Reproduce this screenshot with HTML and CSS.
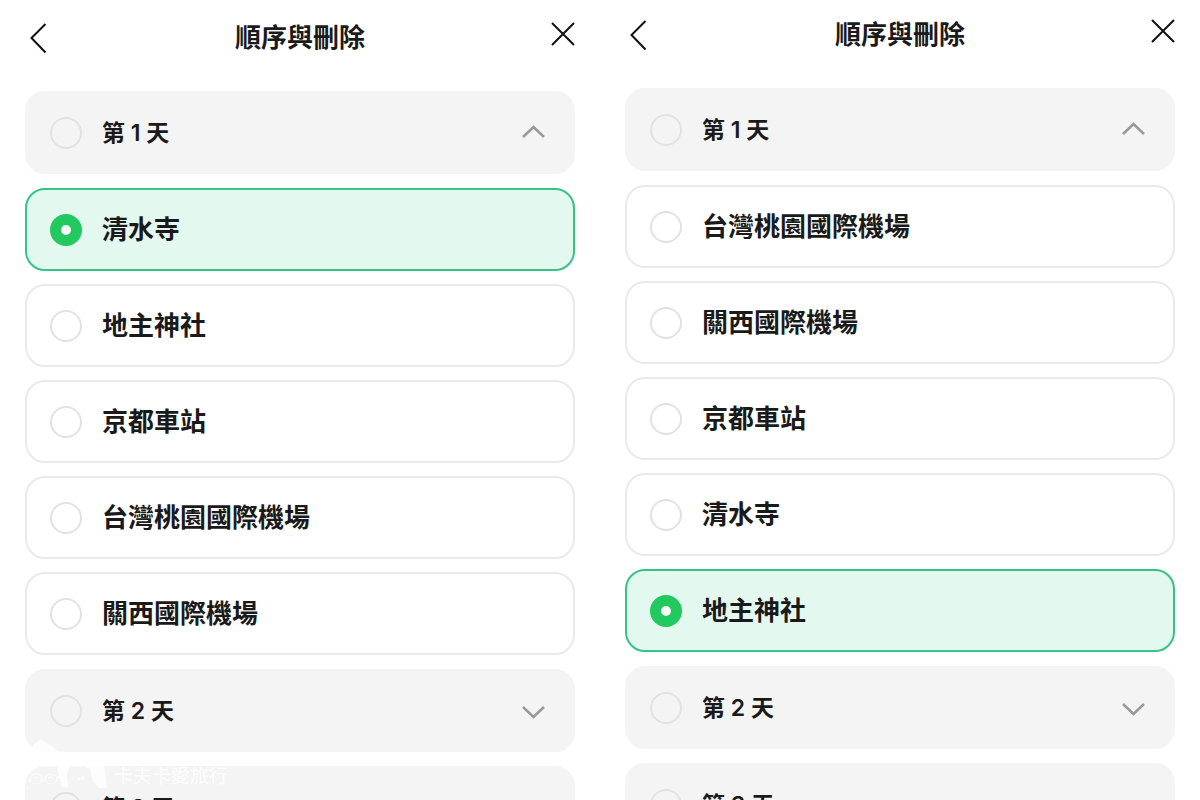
FILE: index.html
```html
<!DOCTYPE html>
<html lang="zh-Hant">
<head>
  <meta charset="UTF-8" />
  <meta name="viewport" content="width=device-width, initial-scale=1.0"/>
  <title>順序與刪除</title>
  <link rel="stylesheet" href="styles.css">
</head>
<body>

  <main class="screens">

    <section class="screen">
      <header class="topbar">
        <button type="button" class="icon-btn" aria-label="返回">
          <svg width="24" height="32" viewBox="0 0 24 32"><path d="M20.500 2 6.500 16l14 14.500"/></svg>
        </button>
        <h1>順序與刪除</h1>
        <button type="button" class="icon-btn" aria-label="關閉">
          <svg width="24" height="24" viewBox="0 0 24 24"><path d="M1 1l22 22M23 1 1 23"/></svg>
        </button>
      </header>

      <form class="days">
        <div class="day">
          <div class="row day-row">
            <label><input type="radio" name="before"><span>第 1 天</span></label>
            <button type="button" class="toggle" aria-label="收合第 1 天" aria-expanded="true">
              <svg width="24" height="16" viewBox="0 0 24 16"><path d="M2 12 12.500 2 23 12"/></svg>
            </button>
          </div>
          <div class="places">
            <label class="row"><input type="radio" name="before" checked><span>清水寺</span></label>
            <label class="row"><input type="radio" name="before"><span>地主神社</span></label>
            <label class="row"><input type="radio" name="before"><span>京都車站</span></label>
            <label class="row"><input type="radio" name="before"><span>台灣桃園國際機場</span></label>
            <label class="row"><input type="radio" name="before"><span>關西國際機場</span></label>
          </div>
        </div>
        <div class="day">
          <div class="row day-row">
            <label><input type="radio" name="before"><span>第 2 天</span></label>
            <button type="button" class="toggle" aria-label="展開第 2 天" aria-expanded="false">
              <svg width="24" height="16" viewBox="0 0 24 16"><path d="M2 4l10.500 10L23 4"/></svg>
            </button>
          </div>
        </div>
        <div class="day">
          <div class="row day-row">
            <label><input type="radio" name="before"><span>第 3 天</span></label>
            <button type="button" class="toggle" aria-label="展開第 3 天" aria-expanded="false">
              <svg width="24" height="16" viewBox="0 0 24 16"><path d="M2 4l10.500 10L23 4"/></svg>
            </button>
          </div>
        </div>
      </form>
    </section>

    <section class="screen screen-after">
      <header class="topbar">
        <button type="button" class="icon-btn" aria-label="返回">
          <svg width="24" height="32" viewBox="0 0 24 32"><path d="M20.500 2 6.500 16l14 14.500"/></svg>
        </button>
        <h1>順序與刪除</h1>
        <button type="button" class="icon-btn" aria-label="關閉">
          <svg width="24" height="24" viewBox="0 0 24 24"><path d="M1 1l22 22M23 1 1 23"/></svg>
        </button>
      </header>

      <form class="days">
        <div class="day">
          <div class="row day-row">
            <label><input type="radio" name="after"><span>第 1 天</span></label>
            <button type="button" class="toggle" aria-label="收合第 1 天" aria-expanded="true">
              <svg width="24" height="16" viewBox="0 0 24 16"><path d="M2 12 12.500 2 23 12"/></svg>
            </button>
          </div>
          <div class="places">
            <label class="row"><input type="radio" name="after"><span>台灣桃園國際機場</span></label>
            <label class="row"><input type="radio" name="after"><span>關西國際機場</span></label>
            <label class="row"><input type="radio" name="after"><span>京都車站</span></label>
            <label class="row"><input type="radio" name="after"><span>清水寺</span></label>
            <label class="row"><input type="radio" name="after" checked><span>地主神社</span></label>
          </div>
        </div>
        <div class="day">
          <div class="row day-row">
            <label><input type="radio" name="after"><span>第 2 天</span></label>
            <button type="button" class="toggle" aria-label="展開第 2 天" aria-expanded="false">
              <svg width="24" height="16" viewBox="0 0 24 16"><path d="M2 4l10.500 10L23 4"/></svg>
            </button>
          </div>
        </div>
        <div class="day">
          <div class="row day-row">
            <label><input type="radio" name="after"><span>第 3 天</span></label>
            <button type="button" class="toggle" aria-label="展開第 3 天" aria-expanded="false">
              <svg width="24" height="16" viewBox="0 0 24 16"><path d="M2 4l10.500 10L23 4"/></svg>
            </button>
          </div>
        </div>
      </form>
    </section>

  </main>

  <div class="watermark">
    <svg width="90" height="60" viewBox="0 0 90 60">
      <!-- hair and hat -->
      <path class="fill" d="M0 9 3 7 7 9 11 4 17 0 23 4 29 7 34 12 60 13 64 12 68 14 78 18 80 28 82 47 76 48 70 42 66 28 64 28 62 26 46 26 42 34 44 47 38 47 35 34 33 26 8 26 2 31Z"/>
      <!-- glasses -->
      <path d="M4 40h3M17 40h5M32 38l8-2"/>
      <ellipse cx="12" cy="39" rx="6" ry="5"/>
      <ellipse cx="27" cy="39" rx="6" ry="5"/>
      <path d="M9 38q3-2 6 0M24 38q3-2 6 0M0 44l5 5"/>
      <circle class="fill" cx="59" cy="38" r="1"/>
      <circle class="fill" cx="55" cy="39" r="1"/>
    </svg>
    <span>卡夫卡愛旅行</span>
  </div>

</body>
</html>
```
FILE: styles.css
```css
:root {
  --text-color: #1a1a1a;
  --line-color: #eaeaea;
  --day-bg: #f4f4f4;
  --green: #22c95f;
  --picked-bg: #e3f9ef;
  --picked-line: #36c485;
}

* {
  box-sizing: border-box;
}

body {
  margin: 0;
  background: #fff;
  color: var(--text-color);
  font-family: Inter, "Noto Sans CJK TC", sans-serif;
  font-weight: 600;
}

.screens {
  display: grid;
  grid-template-columns: 1fr 1fr;
  height: 100vh;
  overflow: hidden;
}

.screen {
  padding: 22px 25px 0;
}

.screen-after {
  padding-top: 19px;
}

.topbar {
  display: flex;
  justify-content: space-between;
  align-items: flex-start;
  margin-bottom: 37px;
}

h1 {
  margin: 0;
  font-size: 26px;
  font-weight: 600;
  line-height: 32px;
}

button {
  display: flex;
  padding: 0;
  border: 0;
  background: none;
  cursor: pointer;
}

svg {
  fill: none;
  stroke-width: 2;
}

.icon-btn svg {
  stroke: #111;
}

.days,
.day {
  display: flex;
  flex-direction: column;
  gap: 14px;
}

.places {
  display: flex;
  flex-direction: column;
  gap: 13px;
}

.row {
  display: flex;
  align-items: center;
  min-height: 83px;
  padding: 0 23px;
  border: 2px solid var(--line-color);
  border-radius: 20px;
  font-size: 26px;
  line-height: 32px;
}

.row span {
  margin-left: 20px;
}

.row:has(input:checked) {
  background: var(--picked-bg);
  border-color: var(--picked-line);
}

.day-row {
  justify-content: space-between;
  padding-right: 28px;
  background: var(--day-bg);
  border-color: var(--day-bg);
  font-size: 23px;
}

.day-row label {
  display: flex;
  align-items: center;
}

.toggle svg {
  stroke: #999;
  stroke-width: 2.5;
}

input[type="radio"] {
  appearance: none;
  flex: none;
  width: 32px;
  height: 32px;
  margin: 0;
  border: 2px solid #e2e2e2;
  border-radius: 50%;
}

input[type="radio"]:checked {
  border: 11px solid var(--green);
  background: #fff;
}

/* blog signature over the bottom left corner */
.watermark {
  position: fixed;
  left: 24px;
  bottom: 0;
  display: flex;
  align-items: center;
  color: #fff;
  font-size: 19px;
  font-weight: 400;
  line-height: 24px;
  opacity: 0.8;
  pointer-events: none;
}

.watermark svg {
  stroke: #fff;
  stroke-width: 1;
}

.watermark .fill {
  fill: #fff;
}

.watermark span {
  padding-top: 14px;
}
```
